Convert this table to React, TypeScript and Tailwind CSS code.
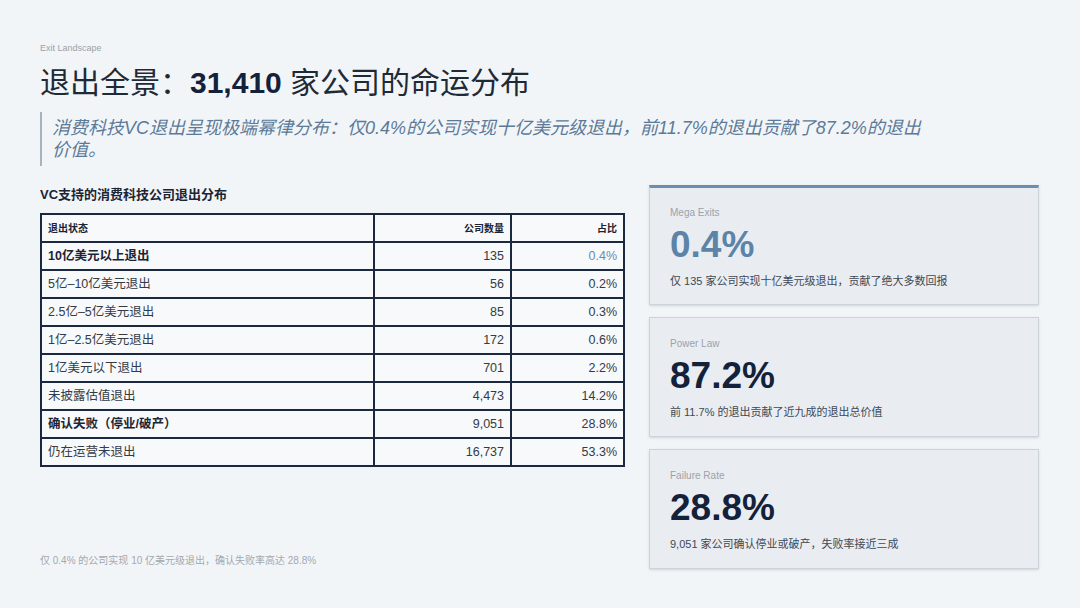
const rows = [
  { name: "10亿美元以上退出", count: "135", pct: "0.4%", bold: true, accent: true },
  { name: "5亿–10亿美元退出", count: "56", pct: "0.2%" },
  { name: "2.5亿–5亿美元退出", count: "85", pct: "0.3%" },
  { name: "1亿–2.5亿美元退出", count: "172", pct: "0.6%" },
  { name: "1亿美元以下退出", count: "701", pct: "2.2%" },
  { name: "未披露估值退出", count: "4,473", pct: "14.2%" },
  { name: "确认失败（停业/破产）", count: "9,051", pct: "28.8%", bold: true },
  { name: "仍在运营未退出", count: "16,737", pct: "53.3%" },
];

const cards = [
  {
    label: "Mega Exits",
    value: "0.4%",
    desc: "仅 135 家公司实现十亿美元级退出，贡献了绝大多数回报",
    highlight: true,
  },
  {
    label: "Power Law",
    value: "87.2%",
    desc: "前 11.7% 的退出贡献了近九成的退出总价值",
  },
  {
    label: "Failure Rate",
    value: "28.8%",
    desc: "9,051 家公司确认停业或破产，失败率接近三成",
  },
];

const font = { fontFamily: '"Liberation Sans", Arial, "Noto Sans CJK SC", sans-serif' };

export default function App() {
  return (
    <div
      className="w-[1080px] h-[608px] bg-[#f2f5f8] px-10 pt-[42px] overflow-hidden flex flex-col"
      style={font}
    >
      <div className="text-[9px] leading-[12px] text-[#9aa1a9]">Exit Landscape</div>

      <h1 className="mt-[11px] text-[30px] leading-[36px] text-[#1f2a37] font-normal">
        退出全景：<span className="font-bold text-[#14213a]">31,410</span> 家公司的命运分布
      </h1>

      <div className="mt-[11px] border-l-2 border-[#a9b3bd] pl-[10px] py-[5px]">
        <p className="italic text-[18px] leading-[22px] text-[#5c7a98] w-[885px]">
          消费科技VC退出呈现极端幂律分布：仅0.4%的公司实现十亿美元级退出，前11.7%的退出贡献了87.2%的退出价值。
        </p>
      </div>

      <div className="mt-[19px] flex gap-6 flex-1 pb-[40px]">
        <div className="w-[585px] flex flex-col">
          <h2 className="text-[13px] leading-[18px] font-bold text-[#1b2433] mt-[1px]">
            VC支持的消费科技公司退出分布
          </h2>

          <table className="mt-[9px] w-full border-collapse border-2 border-[#1a2940] bg-[#f7f9fb] text-[12.5px] text-[#333b45]">
            <thead>
              <tr className="h-[28px]">
                <th className="w-[333px] border-2 border-[#1a2940] px-[6px] text-left text-[10px] font-bold text-[#1b2433]">
                  退出状态
                </th>
                <th className="w-[137px] border-2 border-[#1a2940] px-[6px] text-right text-[10px] font-bold text-[#1b2433]">
                  公司数量
                </th>
                <th className="border-2 border-[#1a2940] px-[6px] text-right text-[10px] font-bold text-[#1b2433]">
                  占比
                </th>
              </tr>
            </thead>
            <tbody>
              {rows.map((r) => (
                <tr key={r.name} className="h-[28px]">
                  <td
                    className={
                      "border-2 border-[#1a2940] px-[6px] " +
                      (r.bold ? "font-bold text-[#1b2433]" : "")
                    }
                  >
                    {r.name}
                  </td>
                  <td className="border-2 border-[#1a2940] px-[6px] text-right">{r.count}</td>
                  <td
                    className={
                      "border-2 border-[#1a2940] px-[6px] text-right " +
                      (r.accent ? "text-[#6a8cb0]" : "")
                    }
                  >
                    {r.pct}
                  </td>
                </tr>
              ))}
            </tbody>
          </table>

          <p className="mt-auto text-[10px] leading-[14px] text-[#a3a9b0] pb-[1px]">
            仅 0.4% 的公司实现 10 亿美元级退出，确认失败率高达 28.8%
          </p>
        </div>

        <div className="w-[390px] flex flex-col gap-[12px]">
          {cards.map((c) => (
            <div
              key={c.label}
              className={
                "h-[120px] bg-[#e9edf2] border border-[#cbd3db] px-[20px] shadow-sm " +
                (c.highlight ? "border-t-[3px] border-t-[#6d8fae] pt-[18px]" : "pt-[19px]")
              }
            >
              <div className="text-[10px] leading-[14px] text-[#9ba2aa]">{c.label}</div>
              <div
                className={
                  "mt-[6px] text-[37px] leading-[38px] font-bold " +
                  (c.highlight ? "text-[#5b84a8]" : "text-[#13213a]")
                }
              >
                {c.value}
              </div>
              <div className="mt-[9px] text-[11px] leading-[16px] text-[#3f4852]">{c.desc}</div>
            </div>
          ))}
        </div>
      </div>
    </div>
  );
}
